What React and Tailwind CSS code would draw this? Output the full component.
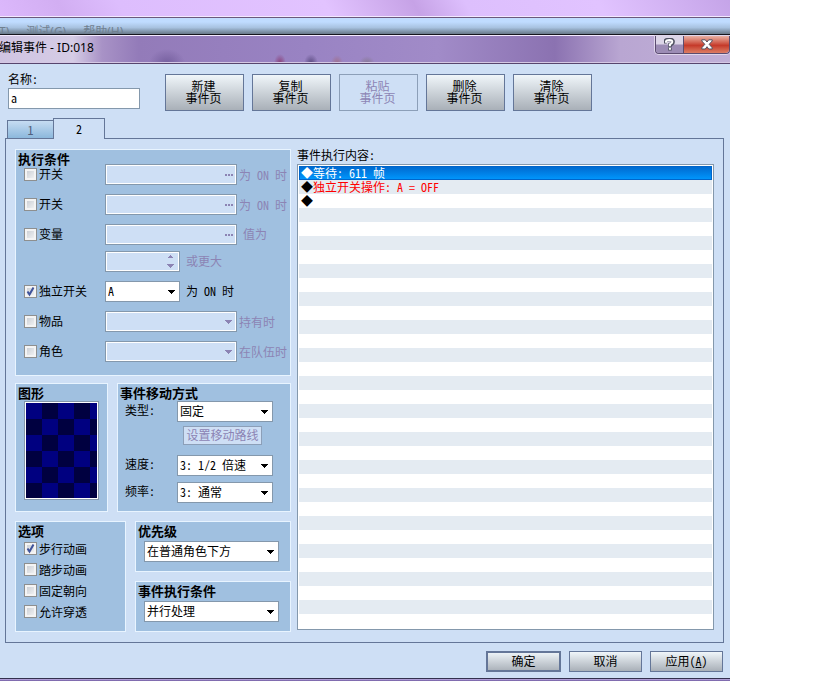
import React, { useState } from 'react';
import clsx from 'clsx';

const PAGE_ACTIONS = [
    { verb: '新建' },
    { verb: '复制' },
    { verb: '粘贴', disabled: true },
    { verb: '删除' },
    { verb: '清除' }
];

const COMMANDS = [
    { text: '等待: 611 帧' },
    { text: '独立开关操作: A = OFF', color: 'text-[#ff0000]' },
    { text: '' }
];

const ROW_COUNT = 33;

const BUTTON = 'border border-[#647698] bg-linear-to-b from-[#f0f6fa] to-[#a9b0b8] text-black';
const BUTTON_OFF = 'border border-[#8c9fb8] bg-[#cedff5] text-[#8c84b4]';
const FIELD = 'h-[21px] border border-[#8498ac]';
const FIELD_OFF = 'bg-[#cedff5] shadow-[inset_0_0_0_1px_#fff]';

function Arrow({ up, className }) {
    return (
        <svg viewBox="0 0 7 4" className={className} fill="currentColor" shapeRendering="crispEdges" aria-hidden="true">
            <path d={up ? 'M3 0h1v1h1v1h1v1H1V2h1V1h1z' : 'M0 0h7v1H6v1H5v1H4v1H3V3H2V2H1V1H0z'} />
        </svg>
    );
}

function Group({ title, className, children }) {
    return (
        <section className={clsx('border border-[#e8f4ff] bg-[#a0c0e0] pt-0.5', className)}>
            <h2 className="h-3 pl-0.5 text-[13px] leading-[14px] font-bold whitespace-nowrap">{title}</h2>
            {children}
        </section>
    );
}

function Check({ label, defaultChecked, className }) {
    return (
        <label className={clsx('flex items-center gap-0.5 whitespace-nowrap', className)}>
            <span className="relative flex size-[13px] shrink-0">
                <input
                    type="checkbox"
                    defaultChecked={defaultChecked}
                    className="peer size-[13px] appearance-none border border-[#8e8f8f] bg-linear-to-br from-[#c4c9d0] to-[#f8f8f8] shadow-[inset_0_0_0_2px_#f4f4f4]"
                />
                <svg viewBox="0 0 13 13" className="pointer-events-none absolute inset-0 hidden peer-checked:block" fill="none" stroke="#3f539b" strokeWidth="2" aria-hidden="true">
                    <path d="M3.5 6.5 L5.5 9.5 L9.5 2.5" />
                </svg>
            </span>
            {label}
        </label>
    );
}

function Select({ label, id, value, disabled, className }) {
    return (
        <div className={clsx('relative', disabled ? 'text-[#8c84b4]' : 'text-black', className)}>
            <select
                id={id}
                aria-label={label}
                disabled={disabled}
                className={clsx(FIELD, 'block w-full appearance-none pr-4 pb-px pl-[2px]', disabled ? FIELD_OFF : 'bg-white')}
            >
                <option>{value}</option>
            </select>
            <Arrow className="pointer-events-none absolute top-[9px] right-[5px] h-1 w-[7px]" />
        </div>
    );
}

/** Disabled picker: empty text box with an ellipsis button at its end. */
function Picker({ label }) {
    return (
        <div className={clsx(FIELD, FIELD_OFF, 'flex w-[132px] shrink-0 items-center pr-[3px]')}>
            <input aria-label={label} disabled className="h-full min-w-0 flex-1" />
            <button disabled aria-label={`选择${label}`} className="text-[#8c84b4]">
                <svg viewBox="0 0 8 2" className="h-0.5 w-2" fill="currentColor" aria-hidden="true">
                    <path d="M0 0h2v2H0zM3 0h2v2H3zM6 0h2v2H6z" />
                </svg>
            </button>
        </div>
    );
}

function ConditionRow({ label, checked, suffix, muted = true, near = true, children }) {
    return (
        <div className="flex h-[21px] items-center">
            <div className="w-[81px] shrink-0 pb-px">
                {label && <Check label={label} defaultChecked={checked} />}
            </div>
            {children}
            <span className={clsx('whitespace-nowrap', near ? 'ml-0.5 pt-px' : 'ml-1.5 pb-0.5', muted && 'text-[#8c84b4]')}>{suffix}</span>
        </div>
    );
}

function Conditions() {
    return (
        <Group title="执行条件" className="pb-[13px]">
            <div className="flex flex-col gap-[9px] pl-2">
                <ConditionRow label="开关" suffix="为 ON 时"><Picker label="开关 1" /></ConditionRow>
                <ConditionRow label="开关" suffix="为 ON 时"><Picker label="开关 2" /></ConditionRow>
                <div className="flex flex-col gap-1.5">
                    <ConditionRow label="变量" suffix="值为" near={false}><Picker label="变量" /></ConditionRow>
                    <ConditionRow suffix="或更大" near={false}>
                        <div className={clsx(FIELD, FIELD_OFF, 'flex w-[75px] shrink-0 pr-[5px]')}>
                            <input aria-label="变量值" disabled className="h-full min-w-0 flex-1" />
                            <div className="flex flex-col justify-between py-[3px] text-[#8c84b4]">
                                <button disabled aria-label="增加"><Arrow up className="block h-1 w-[7px]" /></button>
                                <button disabled aria-label="减少"><Arrow className="block h-1 w-[7px]" /></button>
                            </div>
                        </div>
                    </ConditionRow>
                </div>
                <ConditionRow label="独立开关" checked suffix="为 ON 时" near={false} muted={false}>
                    <Select label="独立开关" value="A" className="w-[75px]" />
                </ConditionRow>
                <ConditionRow label="物品" suffix="持有时">
                    <Select label="物品" value="" disabled className="w-[132px]" />
                </ConditionRow>
                <ConditionRow label="角色" suffix="在队伍时">
                    <Select label="角色" value="" disabled className="w-[132px]" />
                </ConditionRow>
            </div>
        </Group>
    );
}

function Movement() {
    return (
        <Group title="事件移动方式" className="flex-1 pb-2">
            <div className="mt-[3px] grid grid-cols-[52px_96px] items-center pl-[7px]">
                <label htmlFor="move-type" className="pb-[3px]">类型:</label>
                <Select id="move-type" value="固定" />
                <div className="col-span-2 flex h-[33px] items-start pt-1 pl-[58px]">
                    <button disabled className={clsx(BUTTON_OFF, 'h-[19px] w-[79px] pb-px leading-4 whitespace-nowrap')}>设置移动路线</button>
                </div>
                <label htmlFor="move-speed" className="pb-[3px]">速度:</label>
                <Select id="move-speed" value="3: 1/2 倍速" />
                <label htmlFor="move-freq" className="mt-1.5 pb-[3px]">频率:</label>
                <Select id="move-freq" value="3: 通常" className="mt-1.5" />
            </div>
        </Group>
    );
}

function CommandList() {
    const [selected, setSelected] = useState(0);

    return (
        <div className="flex min-w-0 flex-1 flex-col pb-0.5">
            <h2 className="h-[15px] leading-3">事件执行内容:</h2>
            <ul className="flex-1 border border-[#8498ac] bg-white p-px leading-[14px]">
                {Array.from({ length: ROW_COUNT }, (_, i) => {
                    const command = COMMANDS[i];
                    const isSelected = i === selected;
                    return (
                        <li
                            key={i}
                            onClick={() => command && setSelected(i)}
                            className={clsx(
                                'flex h-3.5 pl-0.5 whitespace-pre',
                                isSelected
                                    ? 'bg-linear-to-b from-[#0066cc] to-[#0099ff] text-white shadow-[inset_0_0_0_1px_#0066cc]'
                                    : i % 2 === 1 && 'bg-[#e4ebf2]'
                            )}
                        >
                            {command && <span>◆</span>}
                            {command && <span className={isSelected ? 'text-white' : command.color}>{command.text}</span>}
                        </li>
                    );
                })}
            </ul>
        </div>
    );
}

function TitleBar() {
    return (
        <header className="flex h-[29px] items-start justify-between border-t border-b border-t-[#f4eaff] border-b-[#57456e] bg-[radial-gradient(ellipse_6px_9px_at_280px_27px,#8a3f78_0%,transparent_100%),radial-gradient(ellipse_7px_9px_at_311px_27px,#5a4a80_0%,transparent_100%),radial-gradient(ellipse_6px_8px_at_337px_27px,#a0708c_0%,transparent_100%),radial-gradient(ellipse_8px_8px_at_367px_28px,#85788f_0%,transparent_100%),radial-gradient(ellipse_18px_14px_at_167px_27px,#76609f_0%,transparent_100%),linear-gradient(90deg,#d0c4e2_0%,#d5cce5_10%,#a892c6_14%,#937bb9_19%,#9983c3_42%,#a18bc8_60%,#8b72b1_76%,#b9a6d2_85%,#c0b0d8_100%)] shadow-[inset_0_-1px_0_#d5c8e4]">
            <h1 className="-ml-px pt-1 text-xs leading-4 whitespace-nowrap font-['Noto_Sans','Noto_Sans_CJK_SC',sans-serif] [font-feature-settings:normal]">编辑事件 - ID:018</h1>
            <div className="flex h-[18px] rounded-b-sm border border-t-0 border-[#5b4c70] shadow-[0_0_0_1px_#e0d6ec]">
                <button aria-label="帮助" className="flex w-7 items-center justify-center rounded-bl-sm border-r border-[#5b4c70] bg-linear-to-b from-[#dcd5e7] from-45% to-[#9c8cb5] to-55%">
                    <svg viewBox="0 0 11 13" className="h-[13px] w-[11px]" fill="none" aria-hidden="true">
                        <path d="M1 5.5V3.3Q1.5 1.5 5.5 1.5T9 4Q9 5.8 6 6.6V9M5.9 9.5V12.5" stroke="#4f5161" strokeWidth="3.6" />
                        <path d="M2 4.7V3.4Q2.4 2 5.5 2T8.3 4Q8.3 5.3 5.9 6.3V8.2M5.9 9.8V11.8" stroke="#fff" strokeWidth="2" />
                    </svg>
                </button>
                <button aria-label="关闭" className="flex w-[45px] items-center justify-center rounded-br-sm bg-linear-to-b from-[#e8b0a4] from-0% via-[#c5392a] via-55% to-[#dc7c64]">
                    <svg viewBox="0 0 12 11" className="h-[11px] w-3" fill="#fff" stroke="#53505f" strokeWidth="1" aria-hidden="true">
                        <path d="M.8 .8H4.3L6 3L7.7 .8H11.2V2L8.2 5.3L11.2 8.8V10H7.7L6 7.7L4.3 10H.8V8.8L3.8 5.3L.8 2z" />
                    </svg>
                </button>
            </div>
        </header>
    );
}

export default function App() {
    const [tab, setTab] = useState(2);

    return (
        <div className="bg-white">
            <div className="w-full max-w-[730px] overflow-hidden text-xs leading-3 text-black font-['Noto_Sans_CJK_SC',sans-serif] [font-feature-settings:'hwid']">
                {/* Desktop strip and the editor's menu bar behind the dialog */}
                <div className="h-[18px] border-b border-[#6b587c] bg-[linear-gradient(60deg,#dcb8fc_0%,#d2aef2_9%,#ddbdfd_17%,#e2c3ff_45%,#c6a2e6_57%,#ddbffd_64%,#e1c3ff_82%,#c5a4e8_100%)] shadow-[inset_0_-1px_0_#f3e8ff]" />
                <nav className="flex h-[17px] gap-[17px] overflow-hidden border-b border-[#16161e] bg-linear-to-b from-[#c0dcff] from-25% via-[#a8c2e0] via-60% to-[#687888] text-[#708090] font-['Noto_Sans','Noto_Sans_CJK_SC',sans-serif] [font-feature-settings:normal]">
                    <a href="#tools" className="-ml-px shrink-0 pt-1.5 leading-4">T)</a>
                    <a href="#test" className="shrink-0 pt-1.5 leading-4">测试(G)</a>
                    <a href="#help" className="shrink-0 pt-1.5 leading-4">帮助(H)</a>
                </nav>

                <TitleBar />

                <main className="bg-[#cedff5] pt-2 pb-1.5">
                    <div className="flex gap-[25px] px-2">
                        <div className="w-[132px] shrink-0">
                            <label htmlFor="event-name" className="block h-4 leading-[14px]">名称:</label>
                            <input id="event-name" defaultValue="a" className={clsx(FIELD, 'block w-full bg-white px-0.5 pb-0.5')} />
                        </div>
                        <div className="flex gap-2 pt-0.5">
                            {PAGE_ACTIONS.map(({ verb, disabled }) => (
                                <button key={verb} disabled={disabled} className={clsx('h-[37px] w-[79px] pr-0.5 pb-0.5', disabled ? BUTTON_OFF : BUTTON)}>
                                    {verb}<br />事件页
                                </button>
                            ))}
                        </div>
                    </div>

                    <div role="tablist" className="mt-[7px] flex h-5 items-end pl-[7px]">
                        {[1, 2].map(n => (
                            <button
                                key={n}
                                role="tab"
                                aria-selected={tab === n}
                                onClick={() => setTab(n)}
                                className={clsx(
                                    'border border-[#647698]',
                                    tab === n
                                        ? 'relative -mb-px -ml-px h-[21px] w-[52px] border-b-0 bg-[#cedff5] first:ml-0'
                                        : 'h-[18px] w-[47px] border-b-0 bg-linear-to-b from-[#c6dcf2] to-[#8cb8dc] text-[#50607c]'
                                )}
                            >
                                {n}
                            </button>
                        ))}
                    </div>

                    <div className="mr-1.5 ml-[5px] flex gap-1.5 border border-[#647698] px-[9px] py-2.5">
                        <div className="flex w-[276px] shrink-0 flex-col">
                            <Conditions />
                            <div className="mt-[7px] flex gap-[9px]">
                                <Group title="图形" className="w-[93px]">
                                    <button aria-label="图形" className="mt-[3px] ml-2 block h-[99px] w-[75px] border border-[#8498ac] bg-white p-px">
                                        <span className="block h-full bg-[conic-gradient(#000040_25%,#000080_0_50%,#000040_0_75%,#000080_0)] bg-size-[32px_32px]" />
                                    </button>
                                </Group>
                                <Movement />
                            </div>
                            <div className="mt-[9px] flex gap-[9px]">
                                <Group title="选项" className="w-[111px]">
                                    <div className="mt-0.5 pb-2 pl-2">
                                        <Check label="步行动画" defaultChecked className="h-[21px]" />
                                        <Check label="踏步动画" className="h-[21px]" />
                                        <Check label="固定朝向" className="h-[21px]" />
                                        <Check label="允许穿透" className="h-[21px]" />
                                    </div>
                                </Group>
                                <div className="flex flex-1 flex-col gap-[9px]">
                                    <Group title="优先级" className="pb-[9px]">
                                        <Select label="优先级" value="在普通角色下方" className="mt-[5px] ml-2 w-[135px]" />
                                    </Group>
                                    <Group title="事件执行条件" className="pb-[9px]">
                                        <Select label="事件执行条件" value="并行处理" className="mt-[5px] ml-2 w-[135px]" />
                                    </Group>
                                </div>
                            </div>
                        </div>

                        <CommandList />
                    </div>

                    <footer className="mt-2 flex justify-end gap-2 pr-[7px]">
                        <button className={clsx(BUTTON, 'h-[21px] w-[75px] pb-px outline outline-[#647698] -outline-offset-2')}>确定</button>
                        <button className={clsx(BUTTON, 'h-[21px] w-[73px] pb-px')}>取消</button>
                        <button className={clsx(BUTTON, 'h-[21px] w-[73px] pb-px')}>应用(<u>A</u>)</button>
                    </footer>
                </main>
                <div className="h-[3px] border-t border-[#33304e] bg-linear-to-b from-[#c9b8ea] to-[#6a549c]" />
            </div>
        </div>
    );
}
